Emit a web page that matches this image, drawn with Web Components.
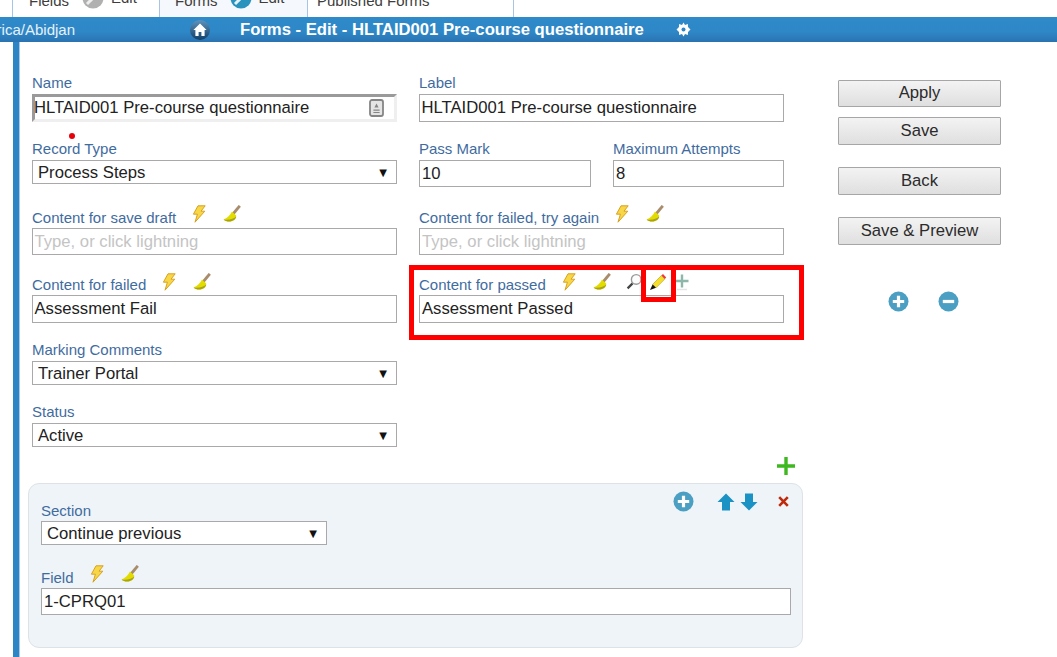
<!DOCTYPE html>
<html><head><meta charset="utf-8"><title>Forms - Edit</title>
<style>
html,body{margin:0;padding:0;height:100%;overflow:hidden;background:#fff;font-family:"Liberation Sans",Arial,sans-serif}
</style></head><body>
<app-page>
  <app-tabs></app-tabs>
  <app-header></app-header>
  <app-main></app-main>
</app-page>
<script>
const ICONS={
 bolt:[14,18,`<path d="M6 .8H13.2L9 6.2H12.8L3 17.2 5.4 9.2H1.4Z" fill="#f7d648" stroke="#d8a21e" stroke-width="1"/>`],
 broom:[18,18,`<path d="M16.8 .8 10 9" stroke="#a98c6c" stroke-width="2.8" fill="none"/><path d="M9 6.6 13.2 10.4C13.2 14 10 16.6 6 16.6 4 16.6 2 16 .6 14.6 4 13.6 7 10.4 9 6.6Z" fill="#e2dc00"/><path d="M.6 14.6C2 16 4 16.6 6 16.6 10 16.6 13.2 14 13.2 11.6 11 14 6 15.4 .6 14.6Z" fill="#a9a417"/>`],
 lens:[16,18,`<path d="M6.6 10.4 1.6 15.4" stroke="#444" stroke-width="2.2"/><circle cx="10.2" cy="6.4" r="4.8" fill="#fdfdfd" stroke="#9a9a9a" stroke-width="1.4"/>`],
 pencil:[18,18,`<path d="M3.6 11.4 12.4 2.6 15.8 6 7 14.8Z" fill="#f4e02a" stroke="#b49a10" stroke-width=".6"/><path d="M12.4 2.6 14 1 17.2 4.4 15.8 6Z" fill="#ee3a3a"/><path d="M3.6 11.4 7 14.8 1 17Z" fill="#111"/>`],
 tplus:[14,18,`<path d="M7 1.5V14.5M.5 8H13.5" stroke="#8db7aa" stroke-width="2.4"/><path d="M2 16.5H12" stroke="#e4e4e4" stroke-width="1.5"/>`],
 gplus:[20,20,`<path d="M10 1V19M1 10H19" stroke="#3eb81f" stroke-width="3.4"/>`],
 cplus:[21,21,`<circle cx="10.5" cy="10.5" r="10" fill="#4b9fc2"/><path d="M10.5 4.8V16.2M4.8 10.5H16.2" stroke="#fff" stroke-width="3.2"/>`],
 cminus:[21,21,`<circle cx="10.5" cy="10.5" r="10" fill="#4b9fc2"/><path d="M4.8 10.5H16.2" stroke="#fff" stroke-width="3.2"/>`],
 up:[18,18,`<path d="M9 .5 17.5 9H13V17.5H5V9H.5Z" fill="#1b92c4"/>`],
 down:[18,18,`<path d="M5 .5H13V9H17.5L9 17.5 .5 9H5Z" fill="#1b92c4"/>`],
 x:[11,11,`<path d="M1.2 1.2 9.8 9.8M9.8 1.2 1.2 9.8" stroke="#bf2a0c" stroke-width="2.6"/>`],
 home:[20,20,`<defs><linearGradient id="h" x1="0" y1="0" x2="0" y2="1"><stop offset="0" stop-color="#5e93bd"/><stop offset="1" stop-color="#123f68"/></linearGradient></defs><circle cx="10" cy="10" r="10" fill="url(#h)"/><path d="M10 3.6 16.6 10H14.6V16H11.4V12H8.6V16H5.4V10H3.4Z" fill="#fff"/>`],
 gear:[15,15,`<path d="M7.5 .5 9 3 11.9 2.1 12 5 14.5 7.5 12 10 11.9 12.9 9 12 7.5 14.5 6 12 3.1 12.9 3 10 .5 7.5 3 5 3.1 2.1 6 3Z" fill="#fff"/><circle cx="7.5" cy="7.5" r="2" fill="#2e85c5"/>`],
 doc:[15,18,`<rect x="1" y="1" width="13" height="16" rx="2" fill="#e4e4e4" stroke="#858585" stroke-width="1.8"/><path d="M7.5 4.4 9.6 8.6H5.4ZM4.4 10.6H10.6V11.8H4.4ZM4.4 13H10.6V14H4.4Z" fill="#858585"/>`],
 editgray:[22,22,`<circle cx="11" cy="11" r="10.5" fill="#b0b0b0"/><path d="M5 17 14 8" stroke="#eee" stroke-width="3"/>`],
 editblue:[22,22,`<circle cx="11" cy="11" r="10.5" fill="#2a93bd"/><path d="M5 17 14 8" stroke="#e4f2f7" stroke-width="3"/>`]
};
const def=(n,html,init)=>customElements.define(n,class extends HTMLElement{
  constructor(){super();this.attachShadow({mode:'open'}).innerHTML=typeof html==='function'?html(this):html}
  connectedCallback(){if(init)init(this)}
});
def('x-icon',`<style>:host{display:inline-flex;flex:none}svg{display:block}</style><span></span>`,el=>{
  const [w,h,b]=ICONS[el.getAttribute('name')];
  el.shadowRoot.querySelector('span').innerHTML=`<svg width="${w}" height="${h}" viewBox="0 0 ${w} ${h}">${b}</svg>`;
});
def('app-page',`<style>:host{display:block;position:relative;width:1057px;height:657px;overflow:hidden;color:#222}</style><slot></slot>`);
def('app-tab',`<style>
:host{display:flex;align-items:flex-end;box-sizing:border-box;height:17px;border-left:1px solid #a9c3e6;font-size:15px;color:#3d3d3d;white-space:nowrap;line-height:16px;padding-bottom:8px;padding-left:16px}
:host([active]){background:#f5f8fd}
</style><slot></slot>`);
def('app-tabs',`<style>
:host{display:flex;height:17px;padding-left:12px;overflow:hidden;align-items:flex-end}
.g{margin-right:7px;height:0;display:flex;align-items:flex-end}
.e{transform:translateY(-3px)}
app-tab:last-child{border-right:1px solid #a9c3e6}
</style>
<app-tab style="width:147px">Fields<span class="g" style="margin-left:13px"><x-icon name="editgray"></x-icon></span><span class="e">Edit</span></app-tab>
<app-tab style="width:148px;padding-left:15px" active>Forms<span class="g" style="margin-left:12px"><x-icon name="editblue"></x-icon></span><span class="e">Edit</span></app-tab>
<app-tab style="width:207px;padding-left:9px">Published Forms</app-tab>`);
def('app-header',`<style>
:host{display:flex;align-items:center;height:25px;background:linear-gradient(#2f8aca 0,#2e87c6 60%,#2a73b2 100%);color:#fff;overflow:hidden;white-space:nowrap}
.tz{width:75px;display:flex;justify-content:flex-end;overflow:hidden;font-size:15px;color:#e6f1f9}
.h{margin-left:115px}
.t{margin-left:30px;font-weight:bold;font-size:16.66px;width:404px}
.g{margin-left:32px}
</style><span class="tz">Africa/Abidjan</span><x-icon class="h" name="home"></x-icon><span class="t">Forms - Edit - HLTAID001 Pre-course questionnaire</span><x-icon class="g" name="gear"></x-icon>`);
def('form-field',`<style>
:host{display:block;min-width:0}
.l{display:flex;align-items:flex-end;height:18px;font-size:15px;line-height:18px;color:#3f6c9f;white-space:nowrap}
.l span{transform:translateY(-2px)}
:host([low]) .l span{transform:translateY(-1px)}
::slotted(x-icon){transform:translateY(var(--iy,-4px))}
</style><div class="l"><span></span><slot name="i"></slot></div><slot></slot>`,el=>{
  el.shadowRoot.querySelector('span').textContent=el.getAttribute('label');
});
def('text-box',`<style>
:host{display:flex;align-items:center;box-sizing:border-box;height:var(--h,28px);border:1px solid #a9a9a9;background:#fff;font-size:16.66px;color:#222;padding:0 2px;white-space:nowrap}
:host([ph]){color:#c4c4c4}
:host([snug]){padding-left:1.5px}
:host([name-box]){border-width:3px;border-color:#9a9a9a #efefef #efefef #9a9a9a;padding:0 10px 0 0;justify-content:space-between;text-indent:-1px}
:host([tall]){height:27px}
</style><slot></slot>`);
def('select-box',`<style>
:host{display:flex;align-items:center;justify-content:space-between;box-sizing:border-box;height:24px;border:1px solid #a9a9a9;background:#fff;font-size:16.66px;color:#222;padding:1px 9px 0 5px;white-space:nowrap}
i{font-style:normal;font-size:10px;color:#111;font-family:"DejaVu Sans",sans-serif}
</style><slot></slot><i>▼</i>`);
def('side-btn',`<style>
:host{display:flex;align-items:center;justify-content:center;box-sizing:border-box;height:28px;margin-top:var(--gap,0);border:1px solid #a6a6a6;border-radius:1px;background:linear-gradient(#f3f3f3,#dfdfdf);font-size:16.66px;color:#2b2b2b}
</style><slot></slot>`);
def('section-panel',`<style>
:host{display:block;box-sizing:border-box;margin-left:-4px;width:775px;height:165px;background:#eff4f9;border:1px solid #dde2e6;border-radius:11px;padding:16px 11px 0 12px;position:relative}
.tools{position:absolute;top:7px;left:644px;display:flex;align-items:center}
.tools .u{margin-left:23px}.tools .d{margin-left:5px}.tools .x{margin-left:20px}
.s{width:286px;margin-top:3px}
.f{margin-top:25px;--iy:-5px}
</style>
<div class="tools"><x-icon name="cplus"></x-icon><x-icon class="u" name="up"></x-icon><x-icon class="d" name="down"></x-icon><x-icon class="x" name="x"></x-icon></div>
<form-field label="Section" class="s" low><select-box>Continue previous</select-box></form-field>
<form-field label="Field" class="f" low><x-icon slot="i" name="bolt" style="margin-left:16px"></x-icon><x-icon slot="i" name="broom" style="margin-left:17px"></x-icon><text-box tall>1-CPRQ01</text-box></form-field>`);
def('app-main',`<style>
:host{display:flex;height:615px}
.stripe{width:7px;margin-left:13px;background:#2d85c5;border-right:1px solid #a9c9e6;box-sizing:border-box;flex:none}
.form{width:752px;margin-left:12px;padding-top:34px;flex:none}
.row{display:grid;grid-template-columns:365px 365px;column-gap:22px;align-items:start;margin-top:var(--gap,0)}
.pair{display:grid;grid-template-columns:172px 171px;column-gap:22px}
.one{width:365px;margin-top:var(--gap,0)}
.plus{display:flex;justify-content:flex-end;margin:9px -12px 7px 0;height:20px}
.side{width:163px;margin-left:54px;padding-top:38px;flex:none}
.pm{display:flex;gap:29px;justify-content:center;margin-top:46px;padding-left:8px}
.dot{position:absolute;left:69px;top:133px;width:6px;height:6px;border-radius:50%;background:#e8000b}
.red{position:absolute;box-sizing:border-box;border:5px solid #f00;pointer-events:none}
.r1{left:409px;top:265px;width:395px;height:75px}
.r2{left:641px;top:265px;width:35px;height:37px}
.b1{margin-left:16px}.b2{margin-left:17px}
</style>
<div class="stripe"></div>
<div class="form">
 <div class="row">
  <form-field label="Name"><text-box name-box>HLTAID001 Pre-course questionnaire<x-icon name="doc"></x-icon></text-box></form-field>
  <form-field label="Label"><text-box snug>HLTAID001 Pre-course questionnaire</text-box></form-field>
 </div>
 <div class="row" style="--gap:20px">
  <form-field label="Record Type"><select-box>Process Steps</select-box></form-field>
  <div class="pair">
   <form-field label="Pass Mark"><text-box tall>10</text-box></form-field>
   <form-field label="Maximum Attempts"><text-box tall>8</text-box></form-field>
  </div>
 </div>
 <div class="row" style="--gap:23px;--iy:-5px">
  <form-field low label="Content for save draft"><x-icon slot="i" class="b1" name="bolt"></x-icon><x-icon slot="i" class="b2" name="broom"></x-icon><text-box tall ph snug>Type, or click lightning</text-box></form-field>
  <form-field low label="Content for failed, try again"><x-icon slot="i" class="b1" name="bolt"></x-icon><x-icon slot="i" class="b2" name="broom"></x-icon><text-box tall ph>Type, or click lightning</text-box></form-field>
 </div>
 <div class="row" style="--gap:22px">
  <form-field low label="Content for failed"><x-icon slot="i" class="b1" name="bolt"></x-icon><x-icon slot="i" class="b2" name="broom"></x-icon><text-box snug>Assessment Fail</text-box></form-field>
  <form-field low label="Content for passed"><x-icon slot="i" class="b1" name="bolt"></x-icon><x-icon slot="i" class="b2" name="broom"></x-icon><x-icon slot="i" name="lens" style="margin-left:15px"></x-icon><x-icon slot="i" name="pencil" style="margin-left:7px"></x-icon><x-icon slot="i" name="tplus" style="margin-left:8px"></x-icon><text-box>Assessment Passed</text-box></form-field>
 </div>
 <div class="one" style="--gap:20px"><form-field label="Marking Comments"><select-box>Trainer Portal</select-box></form-field></div>
 <div class="one" style="--gap:20px"><form-field label="Status"><select-box>Active</select-box></form-field></div>
 <div class="plus"><x-icon name="gplus"></x-icon></div>
 <section-panel></section-panel>
</div>
<div class="side">
 <side-btn style="height:27px;padding-bottom:2px">Apply</side-btn>
 <side-btn style="--gap:10px">Save</side-btn>
 <side-btn style="--gap:22px">Back</side-btn>
 <side-btn style="--gap:22px">Save &amp; Preview</side-btn>
 <div class="pm"><x-icon name="cplus"></x-icon><x-icon name="cminus"></x-icon></div>
</div>
<div class="dot"></div><div class="red r1"></div><div class="red r2"></div>`);
</script>
</body></html>
